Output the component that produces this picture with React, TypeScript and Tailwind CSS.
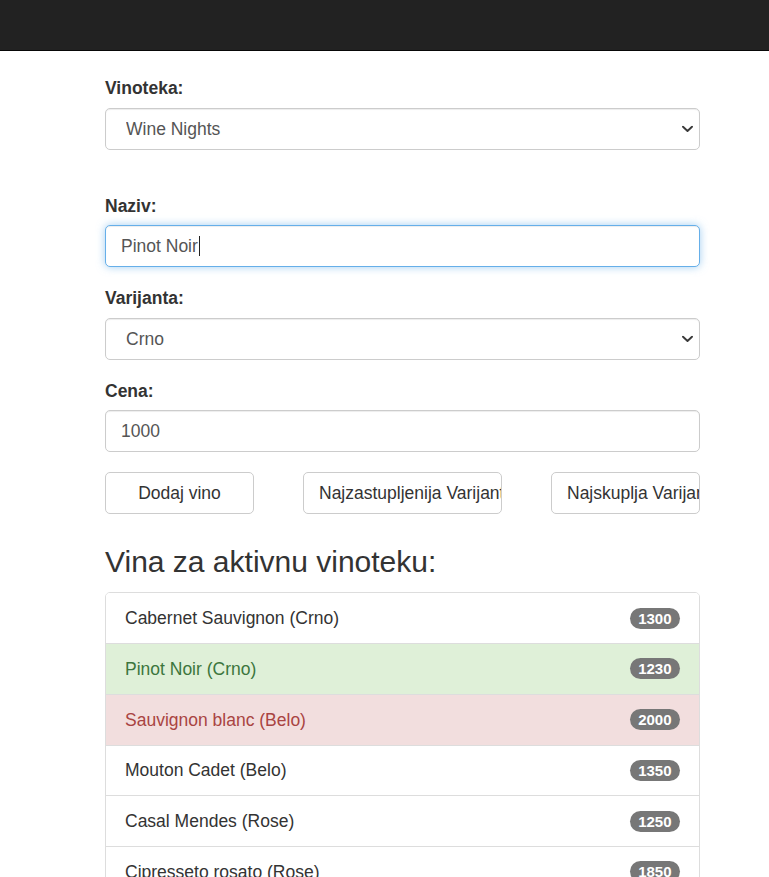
import React from "react";

const font = { fontFamily: '"Liberation Sans", Arial, Helvetica, sans-serif' };

function Chevron() {
  return (
    <svg
      className="pointer-events-none absolute right-[7px] top-1/2 -translate-y-1/2"
      width="11"
      height="7"
      viewBox="0 0 11 7"
      fill="none"
    >
      <path d="M1 1.2 L5.5 5.5 L10 1.2" stroke="#3a3a3a" strokeWidth="1.9" strokeLinecap="round" strokeLinejoin="round" />
    </svg>
  );
}

function SelectBox({ value, options }: { value: string; options: string[] }) {
  return (
    <div className="relative h-[42px] w-full">
      <select
        defaultValue={value}
        className="h-[42px] w-full appearance-none rounded-[5px] border border-[#ccc] bg-white pl-[20px] pr-[30px] text-[17.5px] text-[#555] shadow-[inset_0_1px_1px_rgba(0,0,0,0.075)] outline-none"
        style={font}
      >
        {options.map((o) => (
          <option key={o}>{o}</option>
        ))}
      </select>
      <Chevron />
    </div>
  );
}

const wines = [
  { name: "Cabernet Sauvignon (Crno)", price: "1300", kind: "" },
  { name: "Pinot Noir (Crno)", price: "1230", kind: "success" },
  { name: "Sauvignon blanc (Belo)", price: "2000", kind: "danger" },
  { name: "Mouton Cadet (Belo)", price: "1350", kind: "" },
  { name: "Casal Mendes (Rose)", price: "1250", kind: "" },
  { name: "Cipresseto rosato (Rose)", price: "1850", kind: "" },
];

export default function App() {
  return (
    <div className="min-h-screen bg-white text-[#333]" style={font}>
      <div className="h-[51px] w-full border-b border-[#080808] bg-[#222]" />
      <div className="ml-[105px] w-[595px] pt-[25px] pb-[40px]">
        <div className="mb-[7px] h-[25px] text-[17.5px] font-bold leading-[25px]">Vinoteka:</div>
        <SelectBox value="Wine Nights" options={["Wine Nights", "Vinski Podrum"]} />

        <div className="mt-[44px] mb-[6px] h-[25px] text-[17.5px] font-bold leading-[25px]">Naziv:</div>
        <div className="flex h-[42px] w-full items-center rounded-[5px] border border-[#66afe9] bg-white pl-[15px] text-[17.5px] text-[#555] shadow-[inset_0_1px_1px_rgba(0,0,0,0.075),0_0_8px_rgba(102,175,233,0.6)]">
          <span>Pinot Noir</span>
          <span className="ml-[1px] inline-block h-[20px] w-[1px] bg-[#222]" />
        </div>

        <div className="mt-[19px] mb-[7px] h-[25px] text-[17.5px] font-bold leading-[25px]">Varijanta:</div>
        <SelectBox value="Crno" options={["Crno", "Belo", "Rose"]} />

        <div className="mt-[19px] mb-[6px] h-[25px] text-[17.5px] font-bold leading-[25px]">Cena:</div>
        <div className="flex h-[42px] w-full items-center rounded-[5px] border border-[#ccc] bg-white pl-[15px] text-[17.5px] text-[#555] shadow-[inset_0_1px_1px_rgba(0,0,0,0.075)]">
          1000
        </div>

        <div className="mt-[20px] flex justify-between">
          <button className="h-[42px] w-[149px] overflow-hidden whitespace-nowrap rounded-[5px] border border-[#ccc] bg-white px-[15px] text-center text-[17.5px] text-[#333]">
            Dodaj vino
          </button>
          <button className="h-[42px] w-[199px] overflow-hidden whitespace-nowrap rounded-[5px] border border-[#ccc] bg-white px-[15px] text-left text-[17.5px] text-[#333]">
            Najzastupljenija Varijanta
          </button>
          <button className="h-[42px] w-[149px] overflow-hidden whitespace-nowrap rounded-[5px] border border-[#ccc] bg-white px-[15px] text-left text-[17.5px] text-[#333]">
            Najskuplja Varijanta
          </button>
        </div>

        <h3 className="mt-[31px] h-[33px] text-[30px] font-normal leading-[33px] text-[#333]">
          Vina za aktivnu vinoteku:
        </h3>

        <div className="mt-[14px] overflow-hidden rounded-t-[5px] border border-[#ddd]">
          {wines.map((w, i) => {
            const bg =
              w.kind === "success"
                ? "bg-[#dff0d8] text-[#3c763d]"
                : w.kind === "danger"
                ? "bg-[#f2dede] text-[#a94442]"
                : "bg-white text-[#333]";
            const edge = i > 0 ? "h-[50.75px] border-t border-[#ddd]" : "h-[50px]";
            return (
              <div
                key={w.name}
                className={`flex items-center justify-between pl-[19px] pr-[19px] text-[17.5px] ${edge} ${bg}`}
              >
                <span>{w.name}</span>
                <span className="flex h-[21px] items-center rounded-full bg-[#777] px-[8.5px] text-[15px] font-bold leading-none text-white">
                  {w.price}
                </span>
              </div>
            );
          })}
        </div>
      </div>
    </div>
  );
}
